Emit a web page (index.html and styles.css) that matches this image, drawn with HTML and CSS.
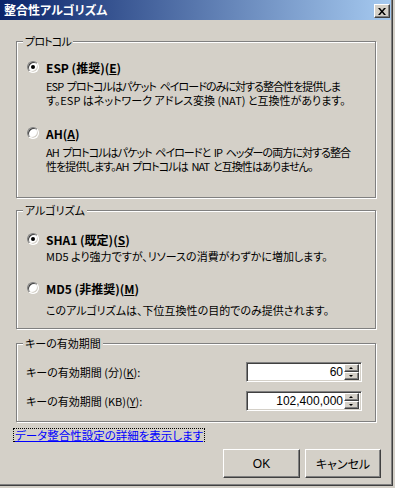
FILE: index.html
```html
<!DOCTYPE html>
<html lang="ja">
<head>
<meta charset="UTF-8" />
<title>整合性アルゴリズム</title>
<link rel="stylesheet" href="styles.css">
</head>
<body>

<div class="window">
<div class="titlebar">
<span class="title">整合性アルゴリズム</span>
<button class="close" aria-label="閉じる">
<svg width="8" height="7" viewBox="0 0 8 7"><path d="M0 0h2l2 2.5 2-2.5h2L5 3.5 8 7H6L4 4.5 2 7H0l3-3.5z" fill="#000"/></svg>
</button>
</div>

<div class="client">
<fieldset class="group protocol">
<legend class="tight-legend">プロトコル</legend>
<div class="group-body">
<div class="option"><span class="radio checked"></span><span class="opt-label">ESP (推奨)(<u>E</u>)</span></div>
<p class="desc">
<span class="line tight">ESP プロトコルはパケット ペイロードのみに対する整合性を提供しま</span>
<span class="line">す。ESP はネットワーク アドレス変換 (NAT) と互換性があります。</span>
</p>
<div class="option ah"><span class="radio"></span><span class="opt-label">AH(<u>A</u>)</span></div>
<p class="desc">
<span class="line tight">AH プロトコルはパケット ペイロードと IP ヘッダーの両方に対する整合</span>
<span class="line tighter">性を提供します。AH プロトコルは NAT と互換性はありません。</span>
</p>
</div>
</fieldset>

<fieldset class="group algorithm">
<legend>アルゴリズム</legend>
<div class="group-body">
<div class="option"><span class="radio checked"></span><span class="opt-label">SHA1 (既定)(<u>S</u>)</span></div>
<p class="desc sha">MD5 より強力ですが、リソースの消費がわずかに増加します。</p>
<div class="option md5"><span class="radio"></span><span class="opt-label">MD5 (非推奨)(<u>M</u>)</span></div>
<p class="desc md5-desc">このアルゴリズムは、下位互換性の目的でのみ提供されます。</p>
</div>
</fieldset>

<fieldset class="group lifetime">
<legend>キーの有効期間</legend>
<div class="group-body">
<div class="field-row">
<label>キーの有効期間 (分)(<u>K</u>):</label>
<div class="spin"><span class="spin-value">60</span><span class="spin-btns"><span class="spin-up"></span><span class="spin-down"></span></span></div>
</div>
<div class="field-row">
<label>キーの有効期間 (KB)(<u>Y</u>):</label>
<div class="spin"><span class="spin-value">102,400,000</span><span class="spin-btns"><span class="spin-up"></span><span class="spin-down"></span></span></div>
</div>
</div>
</fieldset>

<a class="details" href="#">データ整合性設定の詳細を表示します</a>

<div class="actions">
<button class="btn ok">OK</button>
<button class="btn">キャンセル</button>
</div>
</div>
</div>

</body>
</html>
```

FILE: styles.css
```css
* {
box-sizing: border-box;
}

body {
margin: 0;
background: #d4d0c8;
font-family: "Noto Sans CJK JP", sans-serif;
font-size: 11px;
color: #000;
font-feature-settings: "palt";
}

.window {
width: 393px;
height: 486px;
background: #d4d0c8;
border-right: 1px solid #404040;
border-bottom: 1px solid #404040;
box-shadow: inset -1px -1px #808080;
}

.titlebar {
display: flex;
align-items: center;
justify-content: space-between;
width: 391px;
height: 20px;
padding: 0 1px 0 4px;
background: linear-gradient(to right, #0a246a, #a6caf0);
}

.title {
color: #fff;
font-size: 12px;
font-weight: bold;
line-height: 14px;
}

.close {
width: 16px;
height: 14px;
padding: 0;
margin-top: 2px;
display: flex;
align-items: center;
justify-content: center;
background: #d4d0c8;
border: 1px solid;
border-color: #fff #404040 #404040 #fff;
box-shadow: inset -1px -1px #808080;
}

.client {
padding: 14px 0 0 16px;
}

.group {
width: 360px;
margin: 0;
padding: 0;
border: 1px solid #808080;
box-shadow: inset 1px 1px #fff, 1px 1px #fff;
}

.group legend {
margin-left: 6px;
padding: 0 2px;
line-height: 14px;
background: #d4d0c8;
}

.group legend.tight-legend {
letter-spacing: -0.8px;
}

.protocol .group-body {
padding: 12px 0 24px 10px;
}

.algorithm {
margin-top: 5px;
}

.algorithm .group-body {
padding: 15px 0 11px 10px;
}

.lifetime {
margin-top: 7px;
}

.lifetime .group-body {
padding: 12px 13px 10px 9px;
}

.option {
display: flex;
align-items: center;
gap: 7px;
height: 14px;
}

.option.ah {
margin-top: 19px;
}

.option.md5 {
margin-top: 18px;
}

.opt-label {
font-size: 12px;
font-weight: bold;
}

.radio {
position: relative;
width: 12px;
height: 12px;
border-radius: 50%;
background: #fff;
border: 1px solid;
border-color: #808080 #fff #fff #808080;
box-shadow: inset 1px 1px #404040, inset -1px -1px #d4d0c8;
}

.radio.checked::after {
content: "";
position: absolute;
left: 3px;
top: 3px;
width: 4px;
height: 4px;
border-radius: 50%;
background: #000;
}

.desc {
margin: 5px 0 0 19px;
line-height: 14px;
white-space: nowrap;
}

.desc .line {
display: block;
}

.desc .line.tight {
letter-spacing: -0.95px;
word-spacing: 2px;
}

.desc .line.tighter {
letter-spacing: -0.9px;
word-spacing: 2px;
}

.desc.sha {
margin-top: 3px;
}

.desc.md5-desc {
margin-top: 8px;
}

.field-row {
display: flex;
align-items: center;
justify-content: space-between;
height: 20px;
}

.field-row + .field-row {
margin-top: 9px;
}

.spin {
display: flex;
align-items: center;
width: 116px;
height: 20px;
padding: 0 2px 0 4px;
background: #fff;
border: 1px solid;
border-color: #808080 #fff #fff #808080;
box-shadow: inset 1px 1px #404040, inset -1px -1px #d4d0c8;
}

.spin-value {
flex: 1;
text-align: right;
padding-right: 1px;
font-family: "Liberation Sans", sans-serif;
font-size: 12px;
}

.spin-btns {
display: flex;
flex-direction: column;
width: 15px;
height: 16px;
}

.spin-up,
.spin-down {
position: relative;
flex: 1;
background: #d4d0c8;
border: 1px solid;
border-color: #fff #404040 #404040 #fff;
box-shadow: inset -1px -1px #808080;
}

.spin-up::after,
.spin-down::after {
content: "";
position: absolute;
left: 4px;
border-left: 2px solid transparent;
border-right: 2px solid transparent;
}

.spin-up::after {
top: 2px;
border-bottom: 2px solid #000;
}

.spin-down::after {
top: 2px;
border-top: 2px solid #000;
}

.details {
display: inline-block;
margin: 6px 0 0 -3px;
padding: 0 1px;
font-size: 11.5px;
line-height: 12px;
color: #0000ff;
border: 1px dotted #000;
}

.actions {
display: flex;
justify-content: flex-end;
gap: 5px;
width: 365px;
margin-top: 6px;
}

.btn {
width: 76px;
height: 29px;
padding: 0;
font-family: "Noto Sans CJK JP", sans-serif;
font-size: 12px;
font-feature-settings: "palt";
color: #000;
background: #d4d0c8;
border: 1px solid;
border-color: #fff #404040 #404040 #fff;
box-shadow: inset -1px -1px #808080;
}

.btn.ok {
width: 77px;
font-family: "Liberation Sans", sans-serif;
}
```
